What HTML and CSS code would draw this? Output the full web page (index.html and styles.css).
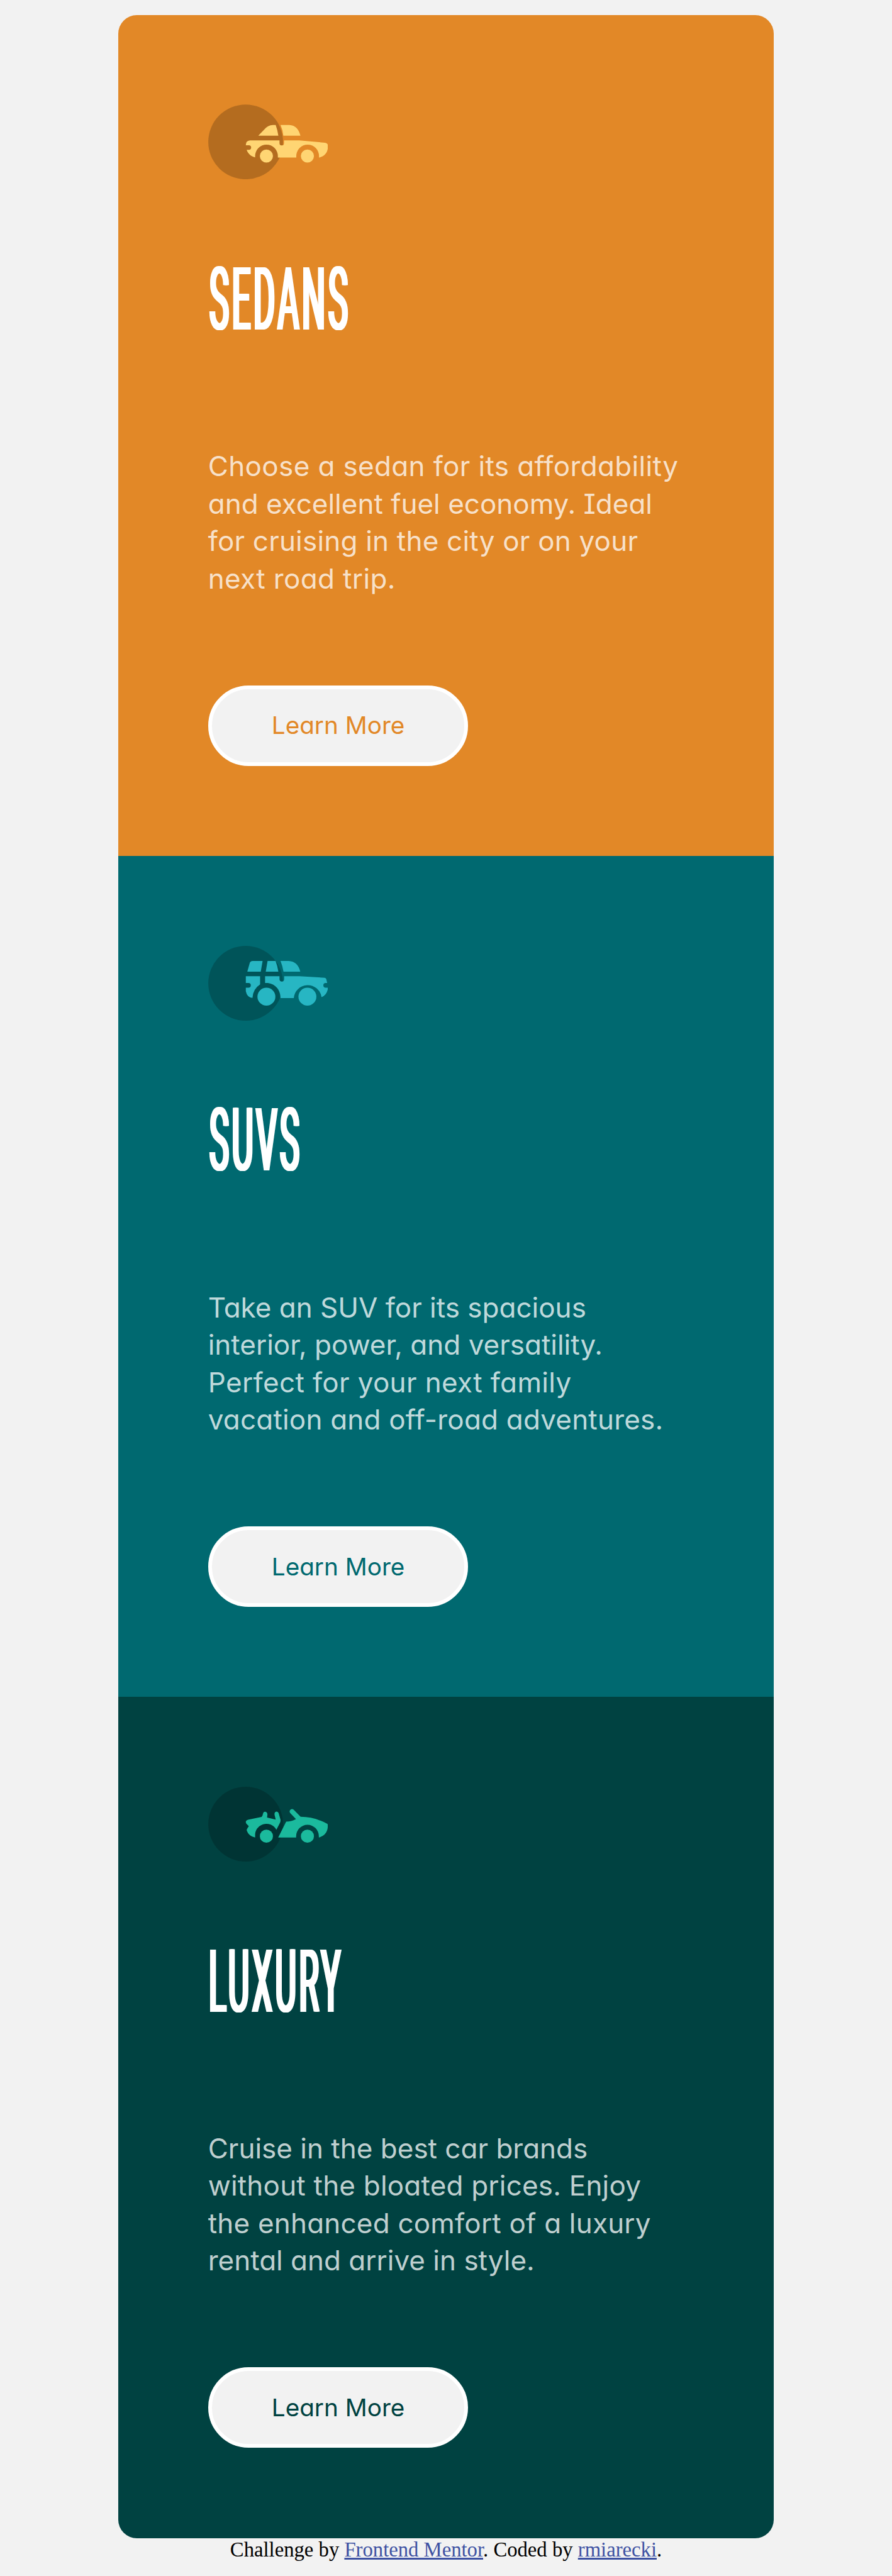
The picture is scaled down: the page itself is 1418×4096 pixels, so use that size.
FILE: index.html
```html
<!DOCTYPE html>
<html lang="en">
<head>
<meta charset="utf-8">
<title>3-column preview card</title>
<link rel="stylesheet" href="styles.css">
</head>
<body>
<main class="cards">
  <section class="card card-sedans">
    <svg class="icon" viewBox="51 61 720 451">
      <circle cx="276" cy="287" r="225.3" fill-opacity=".2"/>
      <g fill="#ffd573">
        <path d="M352 250L385 215Q410 185 440 185H457Q468 215 473 250Z"/>
        <path d="M486 185H540Q590 187 606 250H503Q500 215 486 185Z"/>
        <path d="M302 278H480V295a13.5 13.5 0 0 0 27 0V278H600L755 292Q772 294 772 312C772 350 752 375 718 381V372a68 68 0 0 0-137 0V381H470V372a68.500 68.500 0 0 0-137 0V380C308 375 290 358 282 335H295a14 14 0 0 0 0-28H277Q276 280 302 278Z"/>
        <circle cx="401" cy="372" r="39.500"/><circle cx="648" cy="372" r="39.500"/>
      </g>
    </svg>
    <h2 class="title">SEDANS</h2>
    <p class="text"><span class="loose">Choose a sedan for its affordability</span><span>and excellent fuel economy. Ideal</span><span class="open">for cruising in the city or on your</span><span class="loose">next road trip.</span></p>
    <a class="button">Learn More</a>
  </section>
  <section class="card card-suvs">
    <svg class="icon" viewBox="51 51 720 451">
      <circle cx="276" cy="276.500" r="225.3" fill-opacity=".2"/>
      <g fill="#27b6c3">
        <path d="M286 206L300 156Q304 142 318 142H378L367 206Z"/>
        <path d="M408 142H456Q468 172 473 206H397Z"/>
        <path d="M486 142H535Q590 145 605 206H504Q499 174 486 142Z"/>
        <path d="M277 234H363V283Q320 310 317 365Q285 362 277 325V303H293a14 14 0 0 0 0-28H277Z"/>
        <path d="M393 234H480V252a14 14 0 0 0 28 0V234H600L752 243Q760 244 762 252L767 275H758a14 14 0 0 0 0 28H773Q765 350 733 360a84 84 0 0 0-167 6H486C486 305 440 270 393 275Z"/>
        <circle cx="401" cy="357" r="54"/><circle cx="648" cy="357" r="54"/>
      </g>
    </svg>
    <h2 class="title">SUVS</h2>
    <p class="text"><span>Take an SUV for its spacious</span><span>interior, power, and versatility.</span><span class="loose">Perfect for your next family</span><span class="open">vacation and off-road adventures.</span></p>
    <a class="button">Learn More</a>
  </section>
  <section class="card card-luxury">
    <svg class="icon" viewBox="51 39 720 451">
      <circle cx="276" cy="264.500" r="225.3" fill-opacity=".2"/>
      <g fill="#1bba9d">
        <path d="M290 238L372 221Q379 213 380 203Q383 189 394 190Q407 192 407 207L405 225L457 237L450 208Q448 190 462 189Q472 190 475 199L486 238Q487 248 483 256L461 299A68 68 0 0 0 333 337V345Q295 337 283 304Q281 295 288 287L295 277L280 262Q270 245 290 238Z"/>
        <path d="M520 249Q552 249 579 234L544 197Q537 186 545 178Q556 170 566 178L607 220Q690 220 768 263Q771 266 771 275C771 310 752 337 717 345V337a68 68 0 0 0-137 0V345H472Z"/>
        <circle cx="401" cy="337" r="39.500"/><circle cx="648" cy="337" r="39.500"/>
      </g>
    </svg>
    <h2 class="title">LUXURY</h2>
    <p class="text"><span>Cruise in the best car brands</span><span class="open">without the bloated prices. Enjoy</span><span class="open">the enhanced comfort of a luxury</span><span>rental and arrive in style.</span></p>
    <a class="button">Learn More</a>
  </section>
</main>
<footer class="attribution">Challenge by <a href="#">Frontend Mentor</a>. Coded by <a href="#">rmiarecki</a>.</footer>
</body>
</html>
```
FILE: styles.css
```css
* { box-sizing: border-box; }

body {
  margin: 0;
  padding-top: 23.8px;
  height: 4096px;
  overflow: hidden;
  background: #f2f2f2;
}

.cards {
  width: 1042px;
  margin: 0 auto;
  border-radius: 29.5px;
  overflow: hidden;
}

.card {
  display: flex;
  flex-direction: column;
  align-items: flex-start;
  height: 1337.3px;
  padding: 142.7px;
}

.card-sedans { background: #e28827; color: #e28827; }
.card-suvs { background: #006970; color: #006970; }
.card-luxury { background: #004241; color: #004241; }

.icon {
  flex: none;
  width: 190.3px;
  height: 119px;
}

.icon circle { fill: #000; }
.icon g circle { fill: inherit; }

/* Condensed display lettering: squeezed, with the stems thickened sideways */
.title {
  margin: 120.7px 0 0;
  font: 400 140px/140px Roboto, sans-serif;
  letter-spacing: 13px;
  color: #fff;
  text-shadow: -6px 0 #fff, -3px 0 #fff, 3px 0 #fff, 6px 0 #fff;
  transform: translateX(2px) scaleX(0.371);
  transform-origin: left;
}

.card-luxury .title { transform: translateX(1px) scaleX(0.365); }

.text {
  margin: 166.1px 0 0;
  font: 400 44px/59.47px Inter, sans-serif;
  font-feature-settings: "cv11", "cv08";
  color: rgba(255, 255, 255, 0.75);
  white-space: nowrap;
}

.text span { display: block; }
.text .open { letter-spacing: 0.2px; }
.text .loose { letter-spacing: 0.36px; }

.button {
  display: flex;
  align-items: center;
  justify-content: center;
  width: 413.8px;
  height: 128px;
  margin-top: 139.6px;
  border: 6px solid #fff;
  border-radius: 64px;
  background: #f2f2f2;
  font: 400 38.7px/1 Inter, sans-serif;
  font-feature-settings: "cv11";
}

.attribution {
  font: 32.7px/37px "Liberation Serif", serif;
  text-align: center;
  color: #000;
}

.attribution a { color: #3e52a3; }
```
